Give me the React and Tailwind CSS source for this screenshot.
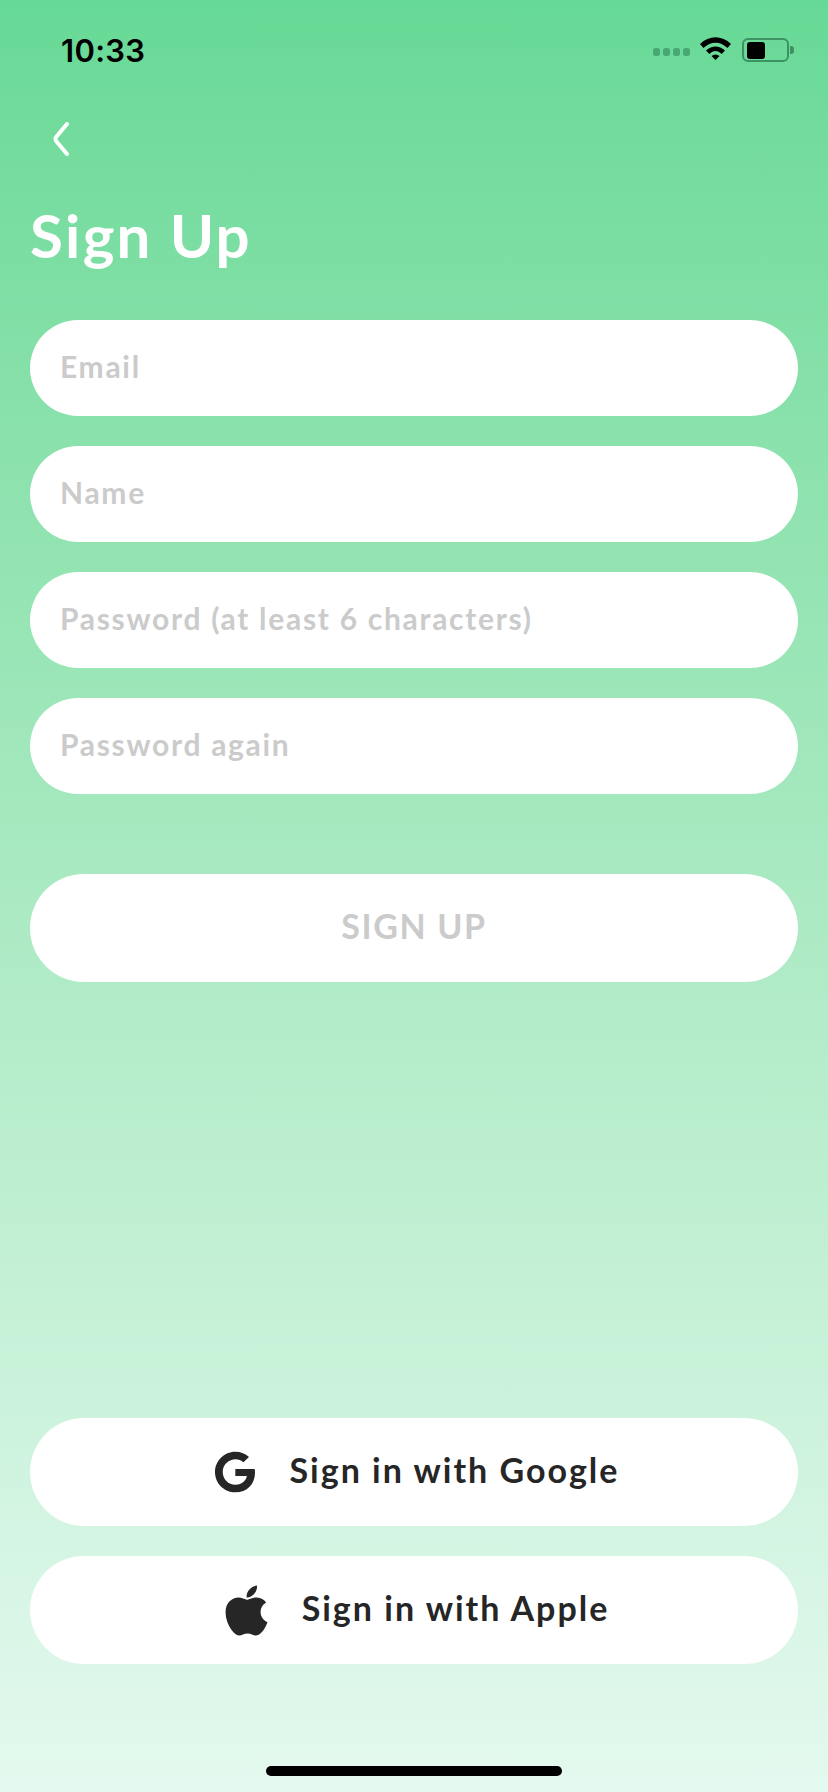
import React from "react";
import { FaApple, FaGoogle } from "react-icons/fa";

const fontStack = { fontFamily: "Lato, 'Noto Sans', sans-serif" };

const StatusBar = () => (
  <div className="flex h-[100px] items-center justify-between pl-[61px] pr-[34px]">
    <span className="text-[31px] font-semibold leading-none text-black tracking-[0.3px] font-[Inter,sans-serif]">10:33</span>
    <div className="flex items-center">
      <div className="mr-[10px] mt-[3px] flex gap-[2.5px]">
        {[0, 1, 2, 3].map((dot) => (
          <span key={dot} className="h-[8px] w-[7.5px] rounded-[2.5px] bg-[#48a873]" />
        ))}
      </div>
      <svg width="31" height="23" viewBox="0 0 31 23" className="mr-[11px] -mt-[4px]">
        <path d="M0 7 C9 -2 22 -2 31 7 L27.5 11 C20 4 11 4 3.5 11 Z" fill="#000" />
        <path d="M6 13.5 C12 8 19 8 25 13.5 L21.7 17 C17.5 13 13.5 13 9.3 17 Z" fill="#000" />
        <path d="M11.5 19 C14 17 17 17 19.5 19 L15.5 23 Z" fill="#000" />
      </svg>
      <div className="flex h-[24px] w-[47px] items-center rounded-[6px] border-2 border-[#3d9163] pl-[3px]">
        <span className="h-[17px] w-[18px] rounded-[3px] bg-black" />
      </div>
      <span className="ml-[1px] h-[8px] w-[4px] rounded-r-[3px] bg-[#3d9163]" />
    </div>
  </div>
);

const Field = ({ label }) => (
  <div className="flex h-[96px] items-center rounded-[48px] bg-white pb-[4px] pl-[30px] text-[30px] font-bold tracking-[1.7px] text-[#cbcbcb]">
    {label}
  </div>
);

const SocialButton = ({ icon, label, className }) => (
  <button className={`flex h-[108px] w-full items-center justify-center rounded-[54px] bg-white text-[34px] font-bold tracking-[2px] text-[#262626] ${className}`}>
    {icon}
    <span className="pb-[6px]">{label}</span>
  </button>
);

const App = () => {
  return (
    <div
      style={fontStack}
      className="flex min-h-[1792px] w-[828px] flex-col bg-gradient-to-b from-[#67d996] to-[#e4f9ef] px-[30px]"
    >
      <div className="-mx-[30px]">
        <StatusBar />
      </div>
      <svg width="18" height="34" viewBox="0 0 18 34" className="ml-[22px] mt-[22px]">
        <path d="M15 2 L4.5 14.5 Q2.5 17 4.5 19.5 L15 32" fill="none" stroke="#fff" strokeWidth="4" strokeLinecap="round" />
      </svg>
      <h1 className="mt-[44px] text-[60px] font-bold leading-[70px] tracking-[2.3px] text-white">Sign Up</h1>

      <div className="mt-[50px] flex flex-col gap-[30px]">
        <Field label="Email" />
        <Field label="Name" />
        <Field label="Password (at least 6 characters)" />
        <Field label="Password again" />
      </div>

      <button className="mt-[80px] h-[108px] rounded-[54px] bg-white pb-[5px] text-[34px] font-bold tracking-[1.6px] text-[#cbcbcb]">
        SIGN UP
      </button>

      <div className="mt-[436px] flex flex-col gap-[30px]">
        <SocialButton icon={<FaGoogle size={42} color="#262626" />} label="Sign in with Google" className="gap-[34px] pl-[5px]" />
        <SocialButton icon={<FaApple size={57} color="#262626" />} label="Sign in with Apple" className="gap-[27px] pr-[1px]" />
      </div>

      <div className="mx-auto mt-[102px] h-[10px] w-[296px] rounded-full bg-black" />
    </div>
  );
};

export default App;
